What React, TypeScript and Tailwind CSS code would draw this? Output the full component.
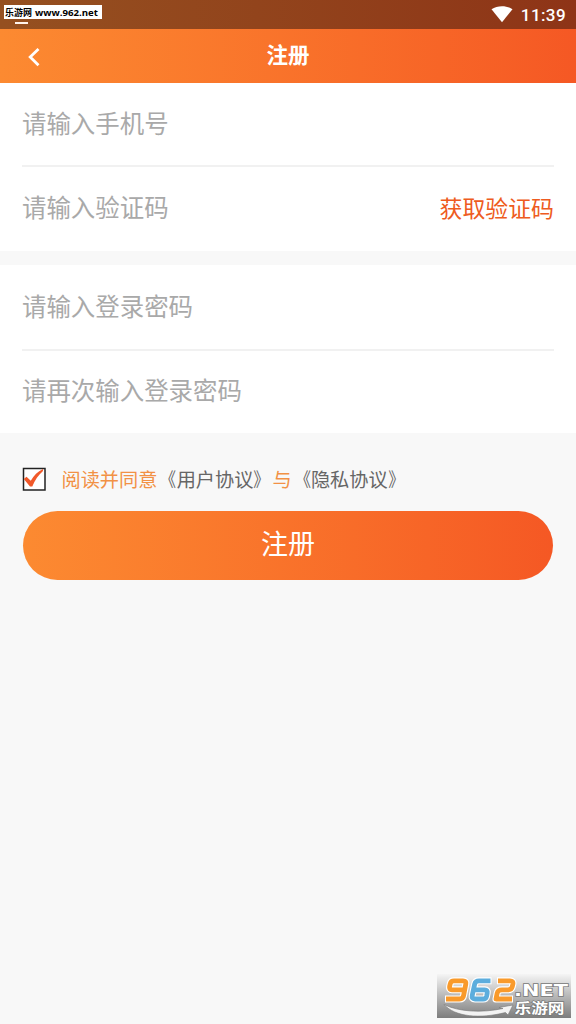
import type { ReactNode } from "react";

function StatusBar() {
  return (
    <div className="relative flex h-[29px] items-center justify-end bg-gradient-to-r from-[#955020] to-[#8e3417] pr-[10px] text-white">
      <div className="absolute left-[4px] top-[5px] flex h-[14px] w-[98px] items-center overflow-hidden bg-white">
        <svg className="h-[14px] w-[98px]" viewBox="0 0 98 14">
          <text x="1" y="11.3" fontSize="9" fontWeight="700" textLength="27" lengthAdjust="spacingAndGlyphs" fontFamily="'Noto Sans CJK SC', sans-serif" fill="#000">乐游网</text>
          <text x="31" y="11" fontSize="9.5" fontWeight="700" textLength="63" lengthAdjust="spacingAndGlyphs" fontFamily="'Open Sans', sans-serif" fill="#000">www.962.net</text>
        </svg>
      </div>
      <div className="absolute left-[15px] top-[22px] h-[2px] w-[13px] bg-[#fff4ec]" />
      <svg className="mr-[8px] h-[17px] w-[22px]" viewBox="0 0 22 17">
        <path d="M.5 3.2C6.5-.9 15.500-.9 21.500 3.200L11 16.200Z" fill="#fff" />
      </svg>
      <span className="font-['Roboto',sans-serif] text-[17px] font-medium leading-[20px] tracking-[0.4px]">11:39</span>
    </div>
  );
}

function Header() {
  return (
    <header className="relative flex h-[54px] items-center justify-center bg-gradient-to-r from-[#fc8a31] to-[#f55824] text-white">
      <svg className="absolute left-[27px] top-[18px] h-[20px] w-[14px]" viewBox="0 0 14 20" fill="none" stroke="#fff" strokeWidth="2.8">
        <path d="M11.500 2 3.200 10 11.500 18.200" />
      </svg>
      <h1 className="pb-[5px] text-[21.5px] font-bold leading-[30px]">注册</h1>
    </header>
  );
}

function Field({ label, action }: { label: string; action?: ReactNode }) {
  return (
    <div className="flex h-[83px] items-center justify-between pb-[3px]">
      <span className="text-[24.45px] font-normal leading-[36px] text-[#a9a9a9]">{label}</span>
      {action}
    </div>
  );
}

function AgreementLink({ title }: { title: string }) {
  return (
    <a>
      <span className="inline-block origin-[95%_50%] scale-x-[0.85]">《</span>
      {title}
      <span className="inline-block origin-[5%_50%] scale-x-[0.85]">》</span>
    </a>
  );
}

function Watermark() {
  return (
    <svg className="h-[44px] w-[134px]" viewBox="0 0 134 44">
      <defs>
        <linearGradient id="plate" x1="0" y1="0" x2="0" y2="1">
          <stop offset="0" stopColor="#f5f5f5" />
          <stop offset="0.5" stopColor="#b8b8b8" />
          <stop offset="1" stopColor="#7d7d7d" />
        </linearGradient>
      </defs>
      <rect width="134" height="44" fill="url(#plate)" />
      <g fill="none" strokeLinejoin="round">
        <g stroke="#fff" strokeWidth="7">
          <path d="M27 15.800H15Q12 15.800 12.600 12.500L13.300 9.500Q14 6.800 17 6.800H26Q29.500 6.800 28.800 10L26.600 21.500Q26 25 22.500 25H8" />
          <path d="M54.500 6.800H42Q38.500 6.800 37.700 10L35.200 21.500Q34.500 25 38 25H46Q49 25 49.600 22.200L50.200 19Q50.800 15.800 47.800 15.800H37" />
          <path d="M60 6.800H73Q76.500 6.800 75.900 10L75.200 12.800Q74.600 15.800 71 15.800H65Q61 15.800 60.200 19L59 25H76" />
        </g>
        <g strokeWidth="4.8">
          <path stroke="#f99a2b" d="M27 15.800H15Q12 15.800 12.600 12.500L13.300 9.500Q14 6.800 17 6.800H26Q29.500 6.800 28.800 10L26.600 21.500Q26 25 22.500 25H9" />
          <path stroke="#5caddd" d="M53.500 6.800H42Q38.500 6.800 37.700 10L35.200 21.500Q34.500 25 38 25H46Q49 25 49.600 22.200L50.200 19Q50.800 15.800 47.800 15.800H37" />
          <path stroke="#f99a2b" d="M61 6.800H73Q76.500 6.800 75.900 10L75.200 12.800Q74.600 15.800 71 15.800H65Q61 15.800 60.200 19L59 25H75" />
        </g>
      </g>
      <path d="M7 30.500C22 38 45 39 66 34.500L62 33.500L76 31L71 41L68.500 38.500C43 45 18 43 7 30.500Z" fill="#f3f3f3" stroke="#777" strokeWidth=".6" />
      <g fill="#fff" stroke="#777" strokeWidth="1.4" paintOrder="stroke" fontWeight="700">
        <text x="77" y="21.500" fontSize="16.500" fontFamily="'DejaVu Sans', sans-serif" textLength="54" lengthAdjust="spacingAndGlyphs">.NET</text>
        <text x="77.500" y="39" fontSize="14" fontFamily="'Liberation Sans', 'Noto Sans CJK SC', sans-serif" textLength="50" lengthAdjust="spacingAndGlyphs">乐游网</text>
      </g>
    </svg>
  );
}

export default function App() {
  return (
    <div className="flex h-[1024px] w-[576px] flex-col overflow-hidden bg-[#f8f8f8] font-['Noto_Sans_CJK_SC',sans-serif]">
      <StatusBar />
      <Header />
      <section className="h-[168px] bg-white px-[22px]">
        <Field label="请输入手机号" />
        <div className="-mt-px h-[2px] bg-[#f1f1f1]" />
        <Field label="请输入验证码" action={<button className="pb-px text-[22.9px] font-normal leading-[34px] text-[#ee5b20]">获取验证码</button>} />
      </section>
      <section className="mt-[14px] h-[168px] bg-white px-[22px]">
        <div className="pt-px">
          <Field label="请输入登录密码" />
        </div>
        <div className="h-[2px] bg-[#f1f1f1]" />
        <div className="-mt-px">
          <Field label="请再次输入登录密码" />
        </div>
      </section>
      <div className="mt-[31px] flex h-[30px] items-center pl-[22px]">
        <svg className="h-[24px] w-[24px]" viewBox="0 0 24 24">
          <rect x="1.500" y="1.500" width="21.500" height="21.500" fill="#fff" stroke="#222" strokeWidth="1.500" />
          <path d="M1.800 12 4.500 9.800 8.800 13.800C12 8.500 15.500 4.500 21 2V4C16.500 8 12.800 13 10.300 19.500H8Z" fill="#f1592a" />
        </svg>
        <p className="ml-[15.5px] whitespace-nowrap pb-px text-[19.2px] font-normal leading-[30px] text-[#666]">
          <span className="text-[#f29145]">阅读并同意</span>
          <AgreementLink title="用户协议" />
          <span className="text-[#f29145]">与</span>
          <AgreementLink title="隐私协议" />
        </p>
      </div>
      <button className="mx-[23px] mt-[17.4px] flex h-[69px] shrink-0 items-center justify-center rounded-full bg-gradient-to-r from-[#fc8a31] to-[#f55824] pb-[5px] text-[27px] font-normal leading-[40px] text-white">
        注册
      </button>
      <footer className="mt-auto flex justify-end pb-[6px] pr-[5px]">
        <Watermark />
      </footer>
    </div>
  );
}
